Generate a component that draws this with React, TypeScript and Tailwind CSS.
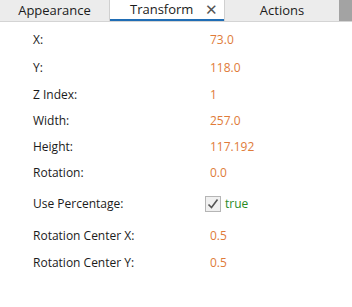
const rows: { label: string; value: string; h: string }[] = [
  { label: "X:", value: "73.0", h: "h-[28px]" },
  { label: "Y:", value: "118.0", h: "h-[28px]" },
  { label: "Z Index:", value: "1", h: "h-[26px]" },
  { label: "Width:", value: "257.0", h: "h-[26px]" },
  { label: "Height:", value: "117.192", h: "h-[26px]" },
  { label: "Rotation:", value: "0.0", h: "h-[26px]" },
];

const rows2 = [
  { label: "Rotation Center X:", value: "0.5", h: "h-[28px]" },
  { label: "Rotation Center Y:", value: "0.5", h: "h-[26px]" },
];

export default function App() {
  return (
    <div className="w-[352px] h-[307px] bg-white overflow-hidden font-['Open_Sans',sans-serif] text-[12px] text-[#1b1b1b]">
      {/* tab strip */}
      <div className="flex h-[22px] border-b border-[#d4d4d4]">
        <div className="w-[110px] shrink-0 bg-[#ececec] border-r border-[#d0d0d0] flex items-center justify-center text-[13px]">
          Appearance
        </div>
        <div className="w-[114px] shrink-0 bg-white border-b-2 border-[#1f6db5] flex items-center pl-[20px] text-[13px]">
          <span>Transform</span>
          <span className="ml-[12px] text-[#555] text-[15px] font-light leading-none">✕</span>
        </div>
        <div className="w-[115px] shrink-0 bg-[#ececec] border-l border-[#d0d0d0] flex items-center justify-center text-[13px]">
          Actions
        </div>
        <div className="flex-1 bg-[#a3a3a3]" />
      </div>

      <div className="pt-[4px]">
        {rows.map((r) => (
          <div key={r.label} className={`flex items-center ${r.h}`}>
            <span className="w-[210px] pl-[33px]">{r.label}</span>
            <span className="text-[#e07b39]">{r.value}</span>
          </div>
        ))}
        <div className="flex items-center h-[36px]">
          <span className="w-[205px] pl-[33px]">Use Percentage:</span>
          <span className="w-[16px] h-[16px] border border-[#b5b5b5] bg-[#f0f0f0] flex items-center justify-center">
            <svg width="12" height="12" viewBox="0 0 12 12">
              <path d="M1.5 6.5 L4.5 9.5 L10.5 1.5" fill="none" stroke="#555" strokeWidth="1.6" />
            </svg>
          </span>
          <span className="ml-[4px] text-[#2a8a1f]">true</span>
        </div>
        {rows2.map((r) => (
          <div key={r.label} className={`flex items-center ${r.h}`}>
            <span className="w-[210px] pl-[33px]">{r.label}</span>
            <span className="text-[#e07b39]">{r.value}</span>
          </div>
        ))}
      </div>
    </div>
  );
}
